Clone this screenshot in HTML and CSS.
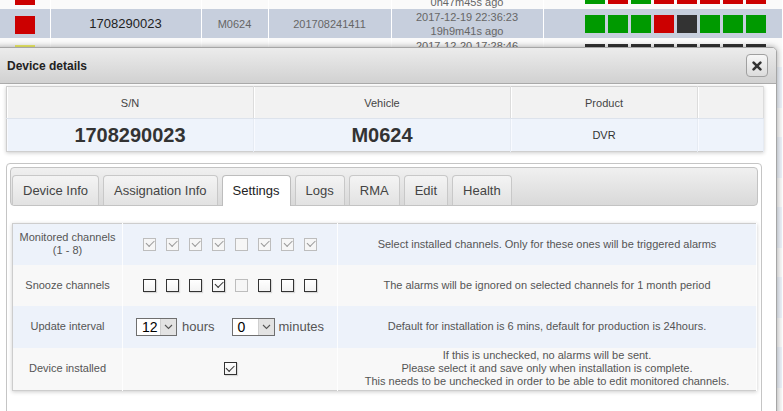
FILE: index.html
```html
<!DOCTYPE html>
<html lang="en">
<head>
    <meta charset="UTF-8">
    <meta name="viewport" content="width=device-width, initial-scale=1.0">
    <title>Devices</title>
    <link rel="stylesheet" href="styles.css">
</head>
<body>

    <table class="devices">
        <colgroup>
            <col style="width: 50px">
            <col style="width: 151px">
            <col style="width: 67px">
            <col style="width: 123px">
            <col style="width: 152px">
            <col>
        </colgroup>
        <tr>
            <td><span class="state red"></span></td>
            <td class="sn"></td>
            <td></td>
            <td></td>
            <td>2017-12-20 17:01:19<br>0h47m45s ago</td>
            <td class="channels">
                <span class="ch green"></span><span class="ch red"></span><span class="ch green"></span><span class="ch red"></span><span class="ch red"></span><span class="ch red"></span><span class="ch red"></span><span class="ch red"></span>
            </td>
        </tr>
        <tr class="selected">
            <td><span class="state red"></span></td>
            <td class="sn">1708290023</td>
            <td>M0624</td>
            <td>201708241411</td>
            <td>2017-12-19 22:36:23<br>19h9m41s ago</td>
            <td class="channels">
                <span class="ch green"></span><span class="ch green"></span><span class="ch green"></span><span class="ch red"></span><span class="ch dark"></span><span class="ch green"></span><span class="ch green"></span><span class="ch green"></span>
            </td>
        </tr>
        <tr>
            <td><span class="state yellow"></span></td>
            <td class="sn"></td>
            <td></td>
            <td></td>
            <td>2017-12-20 17:28:46<br>0h20m18s ago</td>
            <td class="channels">
                <span class="ch dark"></span><span class="ch dark"></span><span class="ch dark"></span><span class="ch dark"></span><span class="ch dark"></span><span class="ch dark"></span><span class="ch dark"></span><span class="ch dark"></span>
            </td>
        </tr>
        <tr class="stripe"><td colspan="6"></td></tr>
        <tr><td colspan="6"></td></tr>
        <tr class="stripe"><td colspan="6"></td></tr>
        <tr><td colspan="6"></td></tr>
        <tr class="stripe"><td colspan="6"></td></tr>
        <tr><td colspan="6"></td></tr>
        <tr class="stripe"><td colspan="6"></td></tr>
        <tr><td colspan="6"></td></tr>
        <tr class="stripe"><td colspan="6"></td></tr>
        <tr><td colspan="6"></td></tr>
    </table>

    <div class="dialog">
        <div class="dialog-title">
            <span>Device details</span>
            <button class="close" title="Close">
                <svg width="10" height="10" viewBox="0 0 10 10"><path d="M1.6 1.6 L8.4 8.4 M8.4 1.6 L1.6 8.4" stroke="#333" stroke-width="2.6" stroke-linecap="round"/></svg>
            </button>
        </div>

        <div class="dialog-body">
            <table class="summary">
                <tr>
                    <th style="width: 247px">S/N</th>
                    <th style="width: 257px">Vehicle</th>
                    <th style="width: 187px">Product</th>
                    <th></th>
                </tr>
                <tr>
                    <td class="big">1708290023</td>
                    <td class="big">M0624</td>
                    <td>DVR</td>
                    <td></td>
                </tr>
            </table>

            <div class="tabs">
                <ul class="tab-nav">
                    <li>Device Info</li>
                    <li>Assignation Info</li>
                    <li class="active">Settings</li>
                    <li>Logs</li>
                    <li>RMA</li>
                    <li>Edit</li>
                    <li>Health</li>
                </ul>

                <div class="tab-body">
                    <table class="settings">
                        <tr class="r1">
                            <td class="name">Monitored channels<br>(1 - 8)</td>
                            <td class="ctrl">
                                <div class="boxes">
                                    <span class="cb off on"></span><span class="cb off on"></span><span class="cb off on"></span><span class="cb off on"></span><span class="cb off"></span><span class="cb off on"></span><span class="cb off on"></span><span class="cb off on"></span>
                                </div>
                            </td>
                            <td class="desc">Select installed channels. Only for these ones will be triggered alarms</td>
                        </tr>
                        <tr class="r2">
                            <td class="name">Snooze channels</td>
                            <td class="ctrl">
                                <div class="boxes">
                                    <span class="cb"></span><span class="cb"></span><span class="cb"></span><span class="cb on"></span><span class="cb off"></span><span class="cb"></span><span class="cb"></span><span class="cb"></span>
                                </div>
                            </td>
                            <td class="desc">The alarms will be ignored on selected channels for 1 month period</td>
                        </tr>
                        <tr class="r3">
                            <td class="name">Update interval</td>
                            <td class="ctrl">
                                <div class="interval">
                                    <span class="pick hours-pick"><span class="val">12</span><span class="arrow"><svg width="9" height="6" viewBox="0 0 9 6"><path d="M1 1 L4.5 4.5 L8 1" fill="none" stroke="#555" stroke-width="1.1"/></svg></span></span>
                                    <span class="unit u-hours">hours</span>
                                    <span class="pick mins-pick"><span class="val">0</span><span class="arrow"><svg width="9" height="6" viewBox="0 0 9 6"><path d="M1 1 L4.5 4.5 L8 1" fill="none" stroke="#555" stroke-width="1.1"/></svg></span></span>
                                    <span class="unit u-mins">minutes</span>
                                </div>
                            </td>
                            <td class="desc">Default for installation is 6 mins, default for production is 24hours.</td>
                        </tr>
                        <tr class="r4">
                            <td class="name">Device installed</td>
                            <td class="ctrl"><div class="boxes"><span class="cb on"></span></div></td>
                            <td class="desc">If this is unchecked, no alarms will be sent.<br>Please select it and save only when installation is complete.<br>This needs to be unchecked in order to be able to edit monitored channels.</td>
                        </tr>
                    </table>
                </div>
            </div>
        </div>
    </div>

</body>
</html>
```

FILE: styles.css
```css
* {
    box-sizing: border-box;
}
body {
    margin: 0;
    font-family: 'Liberation Sans', Arial, sans-serif;
    color: #333;
    background: #fff;
    overflow: hidden;
    height: 411px;
    position: relative;
}

/* page behind the dialog */
.devices {
    width: 100%;
    table-layout: fixed;
    border-collapse: collapse;
    margin-top: -20px;
}
.devices tr {
    height: 29px;
    background: #fafafa;
}
.devices tr.selected {
    background: #c7cfdd;
}
.devices tr.stripe {
    background: #edf2fa;
    height: 41px;
}
.devices td {
    padding: 0;
    border-right: 1px solid #fff;
    text-align: center;
    font-size: 11px;
    line-height: 14px;
    color: #666;
}
.devices td.sn {
    font-size: 13px;
    color: #222;
}
.state {
    display: inline-block;
    width: 20px;
    height: 18px;
    vertical-align: middle;
    margin-top: 3px;
}
.red { background: #cc0000; }
.green { background: #009a00; }
.dark { background: #333; }
.yellow { background: #f2f26a; }
.devices td.channels {
    text-align: left;
    padding-left: 41px;
}
.ch {
    display: inline-block;
    width: 20px;
    height: 18px;
    margin-right: 3px;
    vertical-align: middle;
}

/* dialog */
.dialog {
    position: absolute;
    top: 47px;
    left: -7px;
    width: 784px;
    height: 420px;
    background: #fff;
    border: 1px solid #a6a6a6;
    border-radius: 5px;
    box-shadow: 0 0 6px rgba(0,0,0,0.35);
}
.dialog-title {
    height: 36px;
    display: flex;
    align-items: center;
    justify-content: space-between;
    padding: 0 8px 0 13px;
    background: linear-gradient(#ececec, #d1d1d1);
    border-bottom: 1px solid #ababab;
    border-radius: 4px 4px 0 0;
    font-size: 12px;
    font-weight: bold;
    color: #222;
}
.close {
    width: 22px;
    height: 23px;
    padding: 0;
    display: flex;
    align-items: center;
    justify-content: center;
    border: 1px solid #a0a0a0;
    border-radius: 4px;
    background: linear-gradient(#f7f7f7, #dcdcdc);
    cursor: pointer;
}
.dialog-body {
    padding: 2px 12px 0 12px;
}

.summary {
    width: 758px;
    border-collapse: collapse;
    border: 1px solid #cfcfcf;
    box-shadow: 0 1px 4px rgba(0,0,0,0.2);
}
.summary th {
    height: 32px;
    background: #f2f2f2;
    font-size: 11px;
    font-weight: normal;
    color: #444;
    border-right: 1px solid #dcdcdc;
    border-bottom: 1px solid #dde3ec;
    box-shadow: inset 1px 0 0 #fff;
}
.summary td {
    height: 33px;
    background: #eef3fb;
    text-align: center;
    font-size: 11px;
    color: #333;
    border-right: 1px solid #e6ebf3;
    box-shadow: inset 1px 0 0 #f8faff;
}
.summary td.big {
    font-size: 20px;
    font-weight: bold;
    color: #333;
}

/* tabs */
.tabs {
    margin: 11px 2px 0 0;
    border: 1px solid #c5c5c5;
    border-radius: 4px;
    padding: 3px;
    height: 260px;
}
.tab-nav {
    list-style: none;
    margin: 0;
    height: 39px;
    padding: 8px 2px 0 1px;
    display: flex;
    align-items: flex-end;
    gap: 4px;
    border: 1px solid #c3c3c3;
    border-radius: 4px;
    background: linear-gradient(#f0f0f0, #d9d9d9);
}
.tab-nav li {
    height: 30px;
    line-height: 29px;
    padding: 0 10px;
    font-size: 13px;
    color: #444;
    border: 1px solid #c8c8c8;
    border-bottom: none;
    border-radius: 4px 4px 0 0;
    background: linear-gradient(#f4f4f4, #e2e2e2);
}
.tab-nav li.active {
    height: 31px;
    margin-bottom: -1px;
    background: #fff;
    border-color: #bdbdbd;
    color: #222;
}
.tab-body {
    padding: 17px 1px 0 2px;
}

.settings {
    width: 745px;
    border-collapse: collapse;
    border: 1px solid #cdcdcd;
    box-shadow: 0 1px 4px rgba(0,0,0,0.2);
}
.settings td {
    padding: 0;
    text-align: center;
    font-size: 11px;
    line-height: 13px;
    color: #555;
    border-right: 1px solid rgba(255,255,255,0.8);
}
.settings td.name { width: 110px; }
.settings td.ctrl { width: 215px; }
.settings .r1 { height: 41px; background: #edf2fa; }
.settings .r2 { height: 41px; background: #f8f8f8; }
.settings .r3 { height: 42px; background: #edf2fa; }
.settings .r4 { height: 43px; background: #f8f8f8; }

.boxes {
    display: flex;
    justify-content: center;
    gap: 10px;
}
.cb {
    position: relative;
    width: 13px;
    height: 13px;
    border: 1px solid #333;
    background: linear-gradient(#fff, #f3f3f3);
    box-shadow: 1px 1px 1px rgba(0,0,0,0.12);
}
.cb.off {
    border-color: #bdbdbd;
    background: #f6f6f6;
    box-shadow: none;
}
.cb.on::after {
    content: "";
    position: absolute;
    left: 1.5px;
    top: 1.5px;
    width: 7px;
    height: 3.5px;
    border-left: 1px solid #333;
    border-bottom: 1px solid #333;
    transform: rotate(-45deg);
}
.cb.off.on::after {
    border-color: #9a9a9a;
}

.interval {
    display: flex;
    align-items: center;
    justify-content: center;
}
.pick {
    display: inline-flex;
    height: 18px;
    border: 1px solid #6f6f6f;
    background: #fff;
}
.hours-pick { width: 41px; }
.mins-pick { width: 43px; }
.pick .val {
    flex: 1;
    padding-left: 5px;
    font-size: 14px;
    line-height: 16px;
    color: #000;
    text-align: left;
}
.pick .arrow {
    width: 16px;
    display: flex;
    align-items: center;
    justify-content: center;
    background: #e3e3e3;
    border-left: 1px solid #cfcfcf;
}
.unit {
    font-size: 13px;
    color: #555;
}
.u-hours { margin: 0 17px 0 5px; }
.u-mins { margin-left: 4px; }
```
